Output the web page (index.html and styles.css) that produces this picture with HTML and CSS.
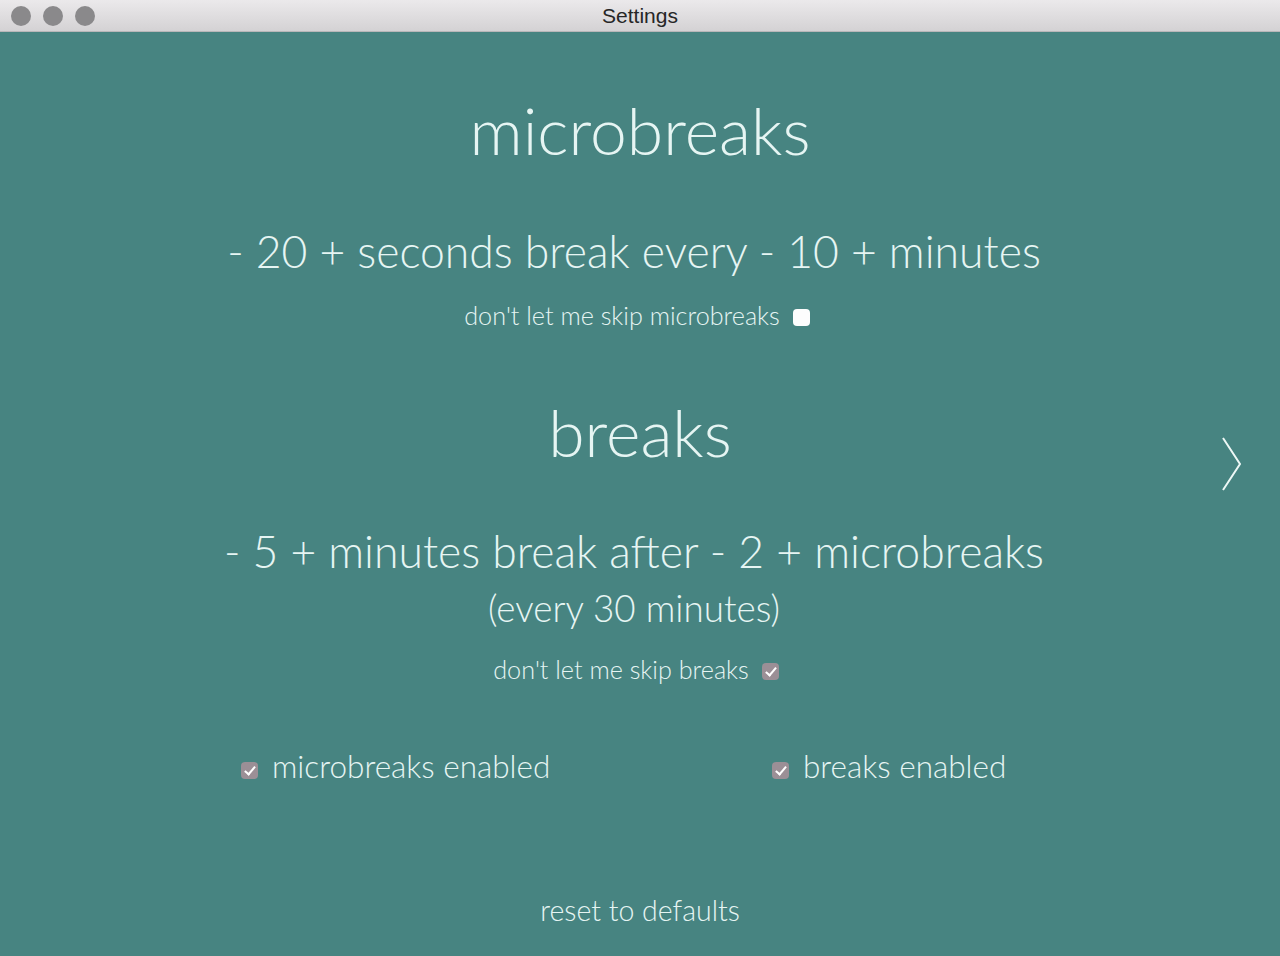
FILE: index.html
```html
<!DOCTYPE html>
<html lang="en">
<head>
<meta charset="UTF-8" />
<title>Settings</title>
<link rel="stylesheet" href="styles.css">
</head>
<body>

<div class="titlebar">
    <div class="lights">
        <span class="light"></span>
        <span class="light"></span>
        <span class="light"></span>
    </div>
    <div class="title">Settings</div>
</div>

<div class="page">
    <h1>microbreaks</h1>
    <p class="line">- 20 + seconds break every - 10 + minutes</p>
    <label class="skip">don't let me skip microbreaks <span class="box"></span></label>

    <h1 class="second">breaks</h1>
    <p class="line line2">- 5 + minutes break after - 2 + microbreaks</p>
    <p class="every">(every 30 minutes)</p>
    <label class="skip skip2">don't let me skip breaks <span class="box checked"></span></label>

    <div class="toggles">
        <label class="toggle"><span class="box checked"></span> microbreaks enabled</label>
        <label class="toggle"><span class="box checked"></span> breaks enabled</label>
    </div>

    <div class="reset">reset to defaults</div>

    <svg class="next" width="24" height="60" viewBox="0 0 24 60">
        <path d="M4 4 L21 30 L4 56" fill="none" stroke="#eef8f6" stroke-width="2"/>
    </svg>
</div>

</body>
</html>
```

FILE: styles.css
```css
body {
    margin: 0;
    font-family: Lato, "Open Sans", sans-serif;
    background: #478481;
    color: #e6f5f3;
    height: 956px;
    overflow: hidden;
}

.titlebar {
    height: 31px;
    background: linear-gradient(#ebe9eb, #d4d2d4);
    border-bottom: 1px solid #b9b7b9;
    display: flex;
    align-items: center;
    position: relative;
}

.lights {
    display: flex;
    gap: 12px;
    padding-left: 11px;
}

.light {
    width: 20px;
    height: 20px;
    border-radius: 50%;
    background: #8a898b;
}

.title {
    position: absolute;
    left: 0;
    right: 0;
    text-align: center;
    font-family: "Liberation Sans", Arial, sans-serif;
    font-size: 21px;
    color: #262626;
}

.page {
    position: relative;
    display: flex;
    flex-direction: column;
    align-items: center;
    font-weight: 300;
}

h1 {
    font-weight: 300;
    font-size: 66px;
    margin: 58px 0 0;
    line-height: 80px;
}

h1.second {
    margin-top: 61px;
}

.line {
    font-size: 44.5px;
    margin: 53px 0 0;
    line-height: 56px;
    padding-right: 12px;
}

.line2 {
    margin-top: 51px;
}

.every {
    font-size: 36.8px;
    margin: 1px 0 0;
    line-height: 56px;
    padding-right: 12px;
}

.skip {
    font-size: 25.2px;
    line-height: 32px;
    margin-top: 20px;
    display: flex;
    align-items: center;
    gap: 13px;
    padding-right: 6px;
}

.skip2 {
    margin-top: 17px;
    padding-right: 8px;
}

.box {
    width: 17px;
    height: 17px;
    border-radius: 4px;
    background: #fdfdfd;
    display: inline-block;
    position: relative;
    top: 2px;
}

.box.checked {
    background: #9b8f96;
}

.box.checked::after {
    content: "";
    position: absolute;
    left: 6px;
    top: 2px;
    width: 4px;
    height: 9px;
    border: solid #fff;
    border-width: 0 2px 2px 0;
    transform: rotate(40deg);
}

.toggles {
    align-self: stretch;
    display: grid;
    grid-template-columns: 531px 1fr;
    padding-left: 241px;
    margin-top: 61px;
}

.toggle {
    font-size: 31.5px;
    line-height: 40px;
    display: flex;
    align-items: center;
    gap: 14px;
}

.toggle .box {
    top: 4px;
}

.reset {
    font-size: 28.5px;
    margin-top: 104px;
    line-height: 40px;
}

.next {
    position: absolute;
    left: 1219px;
    top: 402px;
}
```
